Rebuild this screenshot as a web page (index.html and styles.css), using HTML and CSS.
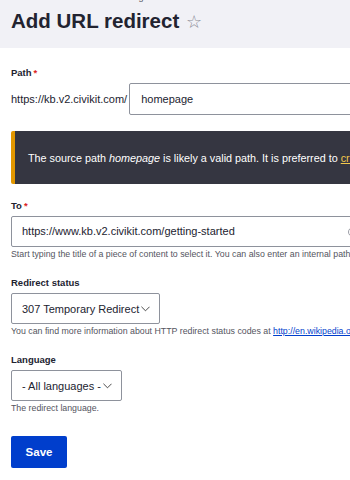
FILE: index.html
```html
<!DOCTYPE html>
<html lang="en">
<head>
<meta charset="utf-8">
<title>Add URL redirect</title>
<link rel="stylesheet" href="styles.css">
</head>
<body>
<div class="page">
  <header class="header">
    <nav class="crumbs">Home &nbsp;›&nbsp; Administration &nbsp;›&nbsp; Configuration &nbsp;›&nbsp; Search and metadata &nbsp;›&nbsp; Redirect</nav>
    <h1 class="title">Add URL redirect <span class="star">☆</span></h1>
  </header>
  <main class="form">
    <div class="field">
      <label class="label">Path<span class="req">*</span></label>
      <div class="path-row">
        <span class="prefix">https://kb.v2.civikit.com/</span>
        <div class="input input-path">homepage</div>
      </div>
    </div>
    <div class="warning">
      <p>The source path <em>homepage</em> is likely a valid path. It is preferred to <a href="#">create</a> a URL alias for existing paths rather than a redirect.</p>
    </div>
    <div class="field field-to">
      <label class="label">To<span class="req">*</span></label>
      <div class="input input-to">https://www.kb.v2.civikit.com/getting-started<span class="throbber"></span></div>
      <div class="desc">Start typing the title of a piece of content to select it. You can also enter an internal path such as /node/add or an external URL.</div>
    </div>
    <div class="field">
      <label class="label">Redirect status</label>
      <div class="select select-status">307 Temporary Redirect<svg class="chev" viewBox="0 0 10 6" width="9" height="6"><path d="M0.5 0.5 L5 5 L9.5 0.5" fill="none" stroke="#222" stroke-width="0.9"/></svg></div>
      <div class="desc">You can find more information about HTTP redirect status codes at <a href="#">http://en.wikipedia.org/wiki/List_of_HTTP_status_codes#3xx_Redirection</a>.</div>
    </div>
    <div class="field">
      <label class="label">Language</label>
      <div class="select select-lang">- All languages -<svg class="chev" viewBox="0 0 10 6" width="9" height="6"><path d="M0.5 0.5 L5 5 L9.5 0.5" fill="none" stroke="#222" stroke-width="0.9"/></svg></div>
      <div class="desc">The redirect language.</div>
    </div>
    <button class="save" type="button">Save</button>
  </main>
</div>
</body>
</html>
```

FILE: styles.css
```css
html, body {
  margin: 0;
  padding: 0;
  background: #fff;
  overflow: hidden;
}
body {
  font-family: "Liberation Sans", Arial, sans-serif;
  color: #222330;
}
.page {
  width: 520px;
}
.header {
  background: #f1f1f6;
  height: 48px;
  padding: 0 11px;
  box-sizing: border-box;
  overflow: hidden;
}
.crumbs {
  font-size: 9px;
  line-height: 12px;
  margin-top: -9px;
  color: #545560;
  white-space: nowrap;
}
.title {
  margin: 5px 0 0;
  font-size: 20.5px;
  line-height: 26px;
  font-weight: 700;
  color: #222330;
  white-space: nowrap;
}
.star {
  font-weight: 400;
  color: #8a8c96;
  font-size: 18px;
  margin-left: 1px;
}
.form {
  padding: 19px 11px 0;
}
.field {
  display: flex;
  flex-direction: column;
  align-items: flex-start;
}
.label {
  font-size: 9.5px;
  font-weight: 700;
  line-height: 12px;
  margin-bottom: 4px;
}
.req {
  color: #dc2323;
  margin-left: 2px;
}
.path-row {
  display: flex;
  align-items: center;
}
.prefix {
  font-size: 11px;
  margin-right: 2px;
  white-space: nowrap;
}
.input {
  height: 32px;
  box-sizing: border-box;
  border: 1px solid #8e929c;
  border-radius: 2px;
  font-size: 11px;
  line-height: 30px;
  padding: 0 11px;
  white-space: nowrap;
}
.input-path {
  width: 360px;
}
.input-to {
  width: 500px;
  height: 31px;
  line-height: 29px;
  padding-left: 10px;
  position: relative;
}
.throbber {
  position: absolute;
  left: 336px;
  top: 10px;
  width: 8px;
  height: 8px;
  border: 1px solid #9a9ca5;
  border-radius: 50%;
}
.warning {
  margin-top: 16px;
  background: #353641;
  border-left: 4px solid #e29700;
  border-radius: 2px;
  height: 53px;
  display: flex;
  align-items: center;
  padding-left: 13px;
  width: 520px;
  box-sizing: border-box;
}
.warning p {
  margin: 0;
  color: #fff;
  font-size: 10.8px;
  white-space: nowrap;
}
.warning a {
  color: #f2c94c;
}
.field-to {
  margin-top: 16px;
}
.desc {
  font-size: 8.8px;
  color: #545560;
  margin-top: 2px;
  line-height: 11px;
  white-space: nowrap;
  margin-bottom: 17px;
}
.desc a {
  color: #003ecc;
}
.select {
  height: 31px;
  box-sizing: border-box;
  border: 1px solid #8e929c;
  border-radius: 2px;
  font-size: 11px;
  display: flex;
  align-items: center;
  padding: 0 9px 0 10px;
  white-space: nowrap;
}
.chev {
  margin-left: 2px;
  margin-top: 1px;
}
.save {
  margin-top: 5px;
  background: #003ecc;
  color: #fff;
  border: none;
  border-radius: 2px;
  width: 56px;
  height: 32px;
  font-family: inherit;
  font-size: 11.5px;
  font-weight: 700;
  padding: 0;
}
```
